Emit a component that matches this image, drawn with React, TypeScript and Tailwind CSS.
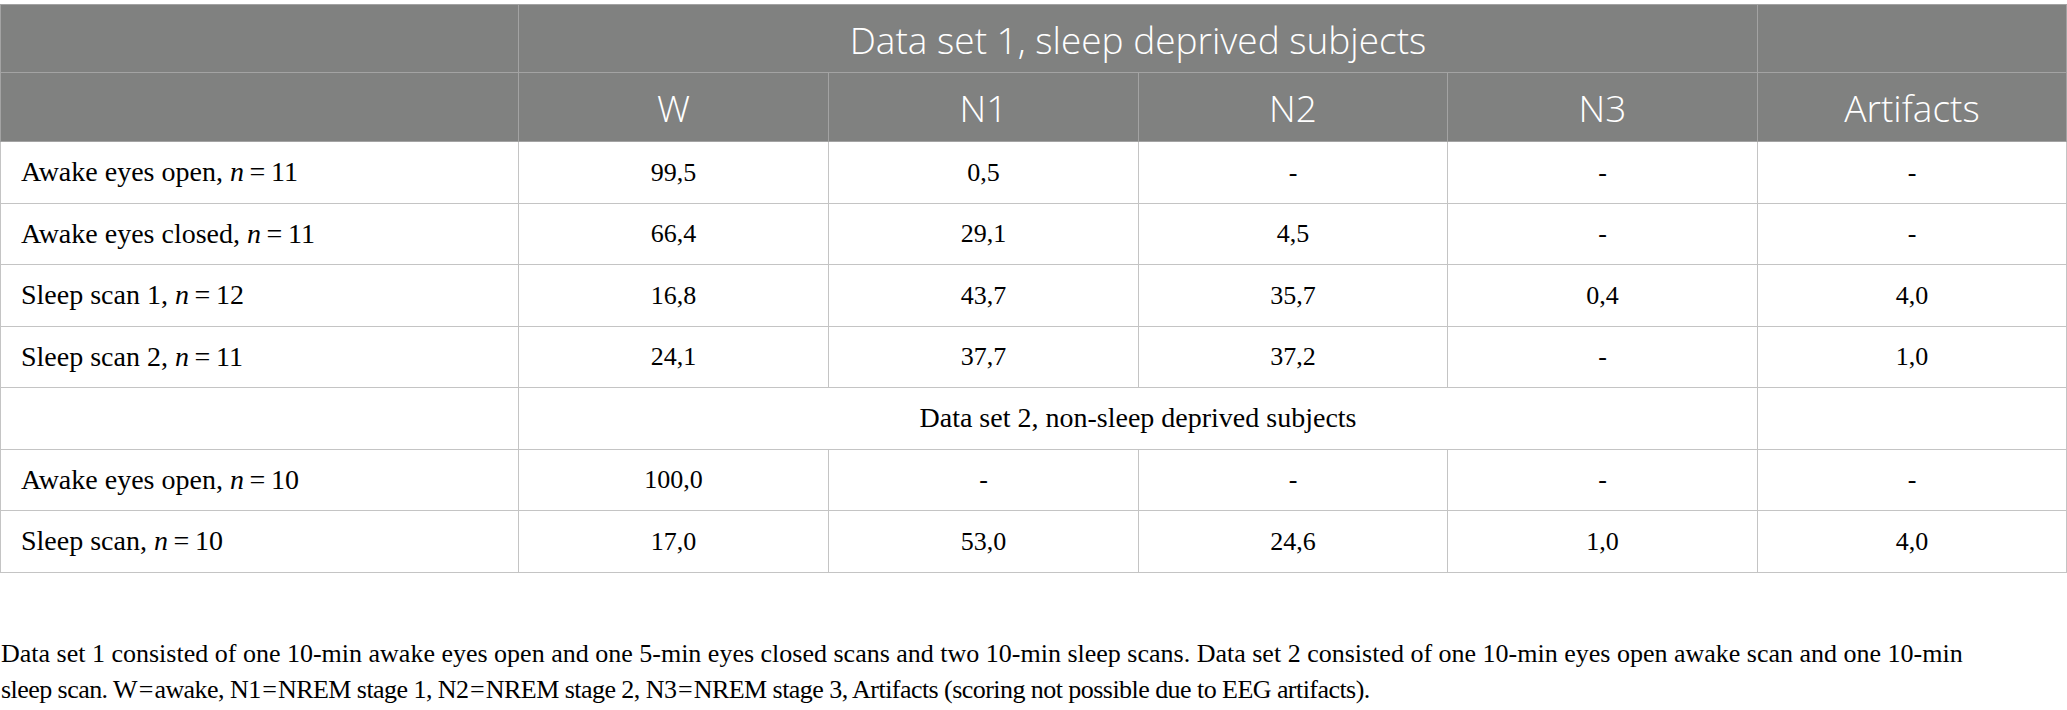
const head = "font-['Open_Sans',sans-serif] text-white text-[37px] font-[350]";
const serif = "font-['Liberation_Serif',serif] text-black";

type Row = { label: string; n: string; values: string[] };

const set1: Row[] = [
  { label: 'Awake eyes open', n: '11', values: ['99,5', '0,5', '-', '-', '-'] },
  { label: 'Awake eyes closed', n: '11', values: ['66,4', '29,1', '4,5', '-', '-'] },
  { label: 'Sleep scan 1', n: '12', values: ['16,8', '43,7', '35,7', '0,4', '4,0'] },
  { label: 'Sleep scan 2', n: '11', values: ['24,1', '37,7', '37,2', '-', '1,0'] },
];

const set2: Row[] = [
  { label: 'Awake eyes open', n: '10', values: ['100,0', '-', '-', '-', '-'] },
  { label: 'Sleep scan', n: '10', values: ['17,0', '53,0', '24,6', '1,0', '4,0'] },
];

function DataRow({ row }: { row: Row }) {
  return (
    <tr className="h-[61.5px]">
      <td className={`border border-[#c4c4c4] pl-[20px] text-left text-[28px] ${serif}`}>
        {row.label}, <i>n</i>&thinsp;=&thinsp;{row.n}
      </td>
      {row.values.map((v, i) => (
        <td key={i} className={`border border-[#c4c4c4] text-center text-[26px] ${serif}`}>
          {v}
        </td>
      ))}
    </tr>
  );
}

export default function App() {
  return (
    <div className="w-[2067px] h-[710px] bg-white pt-[4px]">
      <table className="w-full table-fixed border-collapse">
        <colgroup>
          <col className="w-[518px]" />
          <col className="w-[310px]" />
          <col className="w-[310px]" />
          <col className="w-[309px]" />
          <col className="w-[310px]" />
          <col />
        </colgroup>
        <thead>
          <tr className="h-[68px] bg-[#808180]">
            <th className="border border-[#a3a3a3]" />
            <th colSpan={4} className={`border border-[#a3a3a3] text-center pt-[2px] ${head}`}>
              Data set 1, sleep deprived subjects
            </th>
            <th className="border border-[#a3a3a3]" />
          </tr>
          <tr className="h-[69px] bg-[#808180]">
            <th className="border border-[#a3a3a3]" />
            {['W', 'N1', 'N2', 'N3', 'Artifacts'].map((h) => (
              <th key={h} className={`border border-[#a3a3a3] text-center pt-[2px] ${head}`}>
                {h}
              </th>
            ))}
          </tr>
        </thead>
        <tbody>
          {set1.map((r) => (
            <DataRow key={r.label + r.n + r.values[0]} row={r} />
          ))}
          <tr className="h-[61.5px]">
            <td className="border border-[#c4c4c4]" />
            <td colSpan={4} className={`border border-[#c4c4c4] text-center text-[28px] ${serif}`}>
              Data set 2, non-sleep deprived subjects
            </td>
            <td className="border border-[#c4c4c4]" />
          </tr>
          {set2.map((r) => (
            <DataRow key={r.label + r.n + r.values[0]} row={r} />
          ))}
        </tbody>
      </table>
      <p className={`mt-[63px] pl-[1px] leading-[36px] text-[26px] ${serif}`}>
        Data set 1 consisted of one 10-min awake eyes open and one 5-min eyes closed scans and two 10-min sleep scans. Data set 2 consisted of one 10-min eyes open awake scan and one 10-min
        <br />
        <span className="tracking-[-0.55px]">
          sleep scan. W&#8202;=&#8202;awake, N1&#8202;=&#8202;NREM stage 1, N2&#8202;=&#8202;NREM stage 2, N3&#8202;=&#8202;NREM stage 3, Artifacts (scoring not possible due to EEG artifacts).
        </span>
      </p>
    </div>
  );
}
